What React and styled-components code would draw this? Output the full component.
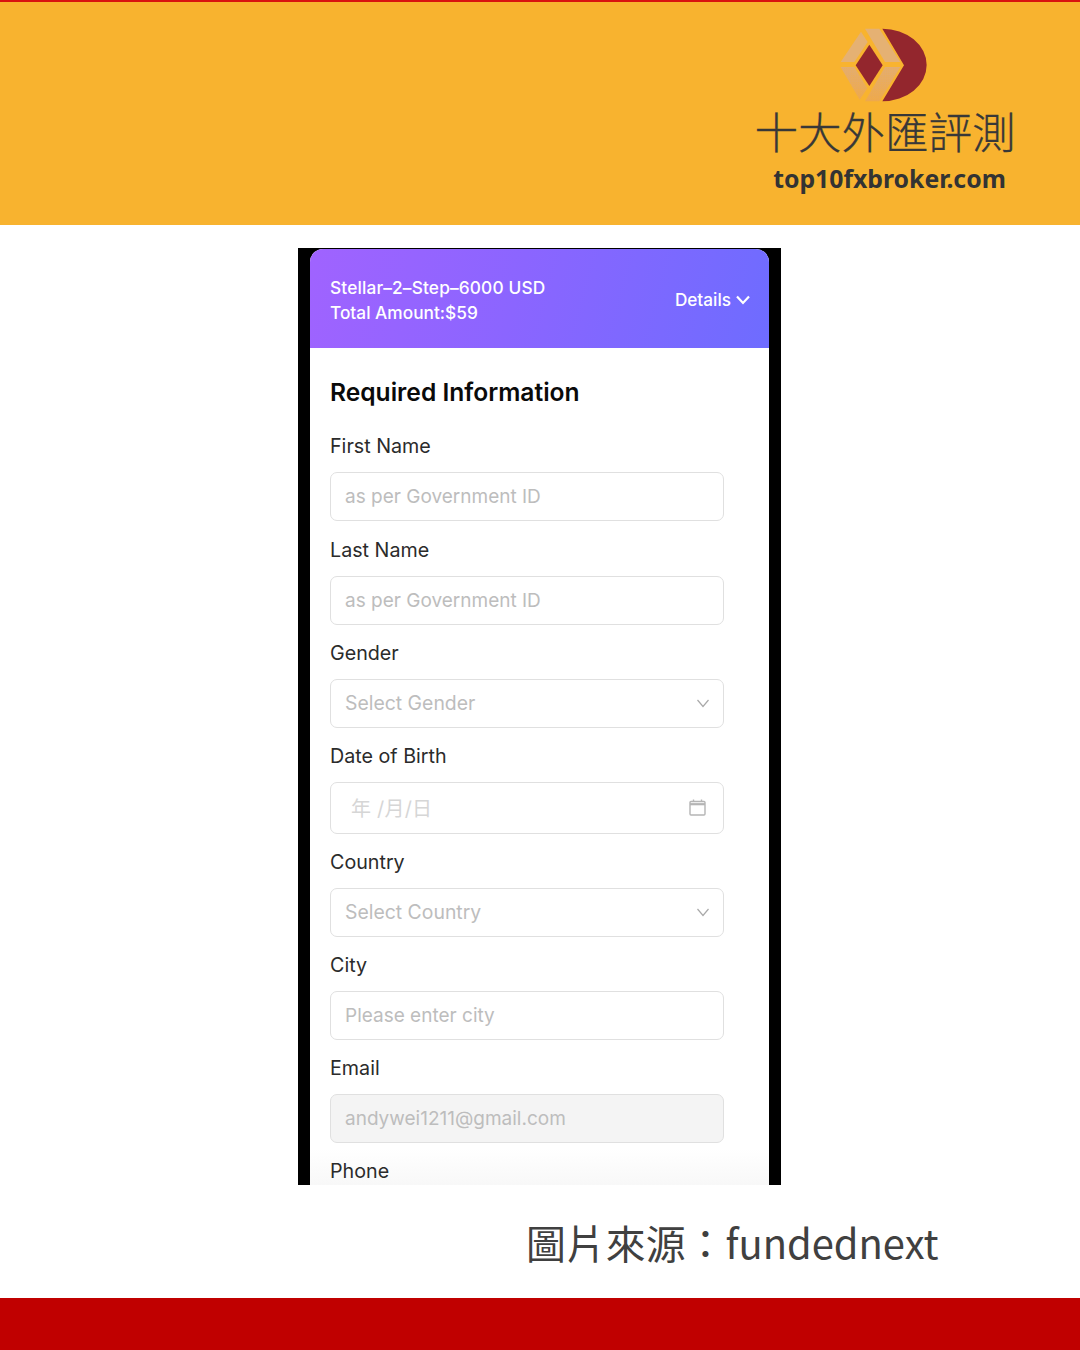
import React from "react";
import styled, { createGlobalStyle } from "styled-components";

const Global = createGlobalStyle`
  html, body { margin: 0; padding: 0; background: #fff; }
  * { box-sizing: border-box; }
`;
const Page = styled.div`
  width: 1080px; height: 1350px; display: flex; flex-direction: column; overflow: hidden;
  background: #fff; font-family: Inter, "Liberation Sans", sans-serif;
`;
const Band = styled.header`
  height: 225px; flex: none; background: #f8b32f; border-top: 2px solid #d9120f;
  display: flex; justify-content: flex-end; padding-right: 66px;
`;
const Brand = styled.div`
  width: 258px; display: flex; flex-direction: column; align-items: center; padding-top: 25px;
`;
const LogoMark = styled.svg`
  width: 90px; height: 76px; margin-left: -2px; display: block; flex: none;
`;
const BrandName = styled.div`
  font-family: "Noto Sans CJK TC", sans-serif; font-weight: 300; font-size: 43.5px; line-height: 50px;
  color: #383838; white-space: nowrap; margin-top: 3px; -webkit-text-stroke: 0.3px #383838;
`;
const BrandUrl = styled.div`
  font-family: "Noto Sans", sans-serif; font-weight: 700; font-size: 24.8px; line-height: 32px;
  color: #333; white-space: nowrap; margin-top: 6px; margin-left: 9px;
`;
const Middle = styled.main`
  flex: 1; display: flex; flex-direction: column; padding: 23px 0 0 298px; min-height: 0;
`;
const Phone = styled.div`
  width: 483px; height: 937px; flex: none; background: #000; padding: 1px 12px 0; overflow: hidden;
`;
const Card = styled.div`
  height: 100%; background: linear-gradient(#fff 0, #fff 900px, #f8f8f8 100%);
  border-radius: 13px 13px 0 0; overflow: hidden;
`;
const Head = styled.div`
  height: 99px; display: flex; align-items: center; justify-content: space-between;
  padding: 0 19px 0 20px; color: #fff; background: linear-gradient(105deg, #a063ff 0%, #8b65ff 45%, #6e6cff 100%);
  font-weight: 500; font-size: 17.3px; line-height: 25px;
`;
const HeadTitle = styled.div`white-space: nowrap; margin-top: 2px;`;
const HeadLine = styled.div`letter-spacing: ${p => p.$spacing ?? 0}px;`;
const Details = styled.div`
  display: flex; align-items: center; gap: 5px; white-space: nowrap; font-size: 17.2px; margin-top: 2px;
`;
const Body = styled.div`
  padding: 28px 45px 0 20px;
`;
const Title = styled.h2`
  margin: 0 0 25.4px; font-size: 24.6px; line-height: 32px; font-weight: 600; color: #0a0a0a; white-space: nowrap;
`;
const Field = styled.div`
  display: flex; flex-direction: column; margin-bottom: 15.15px;
`;
const Label = styled.div`
  font-size: 19.7px; line-height: 26px; color: #2b2b2b; height: 26px; margin-bottom: 13px;
`;
const Control = styled.div`
  height: ${p => (p.$date ? 52 : 49)}px; border: 1.5px solid #e0e0e0; border-radius: 7px;
  background: ${p => (p.$disabled ? "#f4f4f4" : "#fff")};
  display: flex; align-items: center; justify-content: space-between;
  padding: 0 ${p => (p.$date ? 17 : 13)}px 0 ${p => (p.$date ? 20 : 14)}px;
  font-size: ${p => (p.$select ? 19.4 : 19)}px; color: ${p => (p.$date ? "#d6d6d6" : "#bdbdbd")}; white-space: nowrap;
`;
const DateText = styled.span`
  font-family: Inter, "Noto Sans CJK TC", sans-serif; font-size: 20px; letter-spacing: 0.2px;
`;
const Caption = styled.div`
  flex: 1; display: flex; align-items: center; padding: 0 0 0 228px;
  font-family: "Noto Sans CJK TC", sans-serif; font-size: 39.9px; font-weight: 400; color: #404040; white-space: nowrap;
`;
const Foot = styled.footer`
  height: 52px; flex: none; background: #c00000;
`;

const Chevron = () => (
  <svg width="14" height="14" viewBox="0 0 14 14" fill="none" stroke="#a9a9a9" strokeWidth="1.2">
    <path d="M1.5 4 L7 10.5 L12.5 4" />
  </svg>
);
const Calendar = () => (
  <svg width="17" height="17" viewBox="0 0 17 17" fill="none" stroke="#b5b5b5" strokeWidth="1.4">
    <rect x="1" y="2.5" width="15" height="13.5" rx="1" />
    <path d="M1 5.2 H16" strokeWidth="2.2" />
    <path d="M4.5 0.5 V3 M12.5 0.5 V3" />
  </svg>
);

const fields = [
  { label: "First Name", text: "as per Government ID" },
  { label: "Last Name", text: "as per Government ID" },
  { label: "Gender", text: "Select Gender", icon: <Chevron />, select: true },
  { label: "Date of Birth", text: "年 /月/日", date: true, icon: <Calendar /> },
  { label: "Country", text: "Select Country", icon: <Chevron />, select: true },
  { label: "City", text: "Please enter city" },
  { label: "Email", text: "andywei1211@gmail.com", disabled: true },
];

export default function App() {
  return (
    <Page>
      <Global />
      <Band>
        <Brand>
          <LogoMark viewBox="300 80 270 228">
            <defs>
              <linearGradient id="lg" x1="0" y1="0" x2="0" y2="1">
                <stop offset="0" stopColor="#e3ad72" />
                <stop offset="1" stopColor="#eda84e" />
              </linearGradient>
              <pattern id="dots" width="7" height="7" patternUnits="userSpaceOnUse">
                <circle cx="2" cy="2" r="1.2" fill="#f8b32f" />
              </pattern>
            </defs>
            <path d="M430 85 A 133 109 0 0 1 430 303 L495 195 Z" fill="#93262d" />
            <path d="M391 133 L431 195 L391 257 L350 195 Z" fill="#93262d" />
            <path d="M366 94 L305 185 H346 L386 125 Z" fill="#e5b173" />
            <path d="M378 85 H421 L484 185 H438 Z" fill="#e5b173" />
            <path d="M305 200 H346 L385 264 L362 298 Z" fill="url(#lg)" />
            <path d="M438 200 H484 L421 303 H378 Z" fill="url(#lg)" />
            <path d="M305 200 H346 L385 264 L362 298 Z" fill="url(#dots)" opacity="0.7" />
            <path d="M438 200 H484 L421 303 H378 Z" fill="url(#dots)" opacity="0.7" />
          </LogoMark>
          <BrandName>十大外匯評測</BrandName>
          <BrandUrl>top10fxbroker.com</BrandUrl>
        </Brand>
      </Band>
      <Middle>
        <Phone>
          <Card>
            <Head>
              <HeadTitle>
                <HeadLine $spacing={0.15}>Stellar–2–Step–6000 USD</HeadLine>
                <HeadLine>Total Amount:$59</HeadLine>
              </HeadTitle>
              <Details>
                Details
                <svg width="14" height="10" viewBox="0 0 14 10" fill="none" stroke="#fff" strokeWidth="2.2">
                  <path d="M1 1.5 L7 8 L13 1.5" />
                </svg>
              </Details>
            </Head>
            <Body>
              <Title>Required Information</Title>
              {fields.map(f => (
                <Field key={f.label}>
                  <Label>{f.label}</Label>
                  <Control $date={f.date} $disabled={f.disabled} $select={f.select}>
                    {f.date ? <DateText>{f.text}</DateText> : <span>{f.text}</span>}
                    {f.icon}
                  </Control>
                </Field>
              ))}
              <Label>Phone</Label>
            </Body>
          </Card>
        </Phone>
        <Caption>圖片來源：fundednext</Caption>
      </Middle>
      <Foot />
    </Page>
  );
}
